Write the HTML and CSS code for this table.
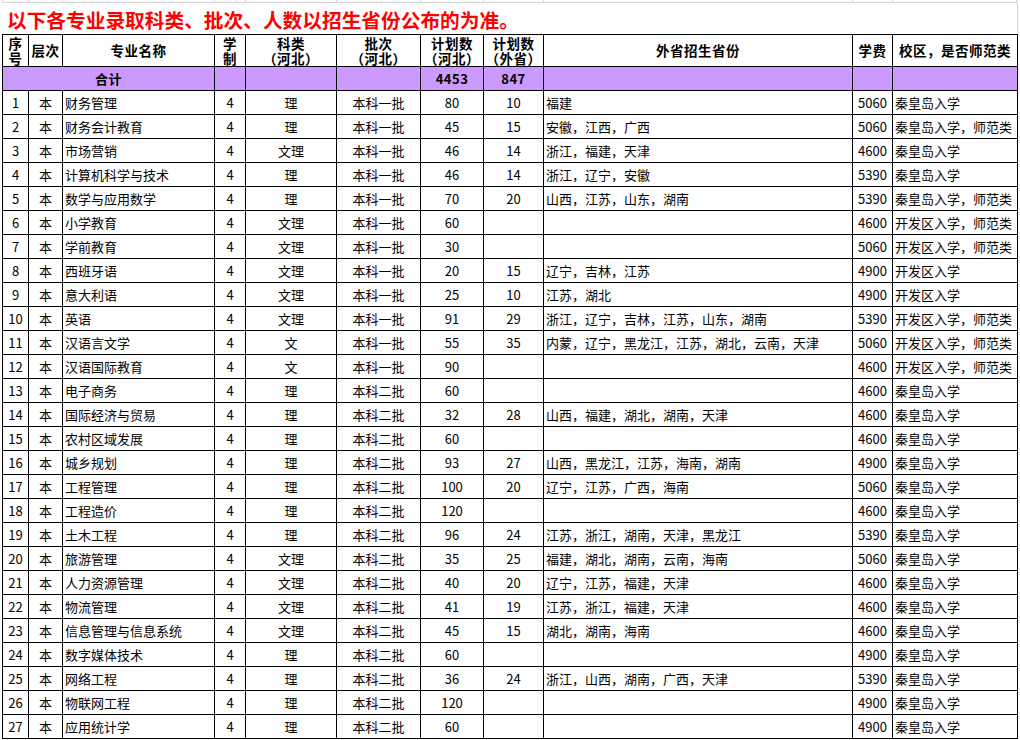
FILE: index.html
```html
<!DOCTYPE html>
<html lang="zh-CN">
<head>
<meta charset="utf-8">
<title>招生计划</title>
<link rel="stylesheet" href="styles.css">
</head>
<body>
<div class="sheet">
  <div class="gridtop">
    <span class="w1"></span><span class="w2"></span><span class="w3"></span><span class="w4"></span><span class="w5"></span><span class="w6"></span><span class="w7"></span><span class="w8"></span><span class="w9"></span><span class="w10"></span><span class="w11"></span>
  </div>
  <div class="title">以下各专业录取科类、批次、人数以招生省份公布的为准。</div>
  <table class="t">
    <colgroup>
      <col class="w1"><col class="w2"><col class="w3"><col class="w4"><col class="w5"><col class="w6"><col class="w7"><col class="w8"><col class="w9"><col class="w10"><col class="w11">
    </colgroup>
    <thead>
      <tr class="hd">
        <th><span class="ln">序</span><span class="ln">号</span></th>
        <th>层次</th>
        <th>专业名称</th>
        <th><span class="ln">学</span><span class="ln">制</span></th>
        <th><span class="ln">科类</span><span class="ln">（河北）</span></th>
        <th><span class="ln">批次</span><span class="ln">（河北）</span></th>
        <th><span class="ln">计划数</span><span class="ln">（河北）</span></th>
        <th><span class="ln">计划数</span><span class="ln">（外省）</span></th>
        <th>外省招生省份</th>
        <th>学费</th>
        <th>校区，是否师范类</th>
      </tr>
      <tr class="total">
        <td colspan="3" class="c">合计</td>
        <td></td><td></td><td></td>
        <td class="c">4453</td>
        <td class="c">847</td>
        <td></td><td></td><td></td>
      </tr>
    </thead>
    <tbody>
      <tr><td class="c">1</td><td class="c">本</td><td>财务管理</td><td class="c">4</td><td class="c">理</td><td class="c">本科一批</td><td class="c">80</td><td class="c">10</td><td>福建</td><td class="c">5060</td><td>秦皇岛入学</td></tr>
      <tr><td class="c">2</td><td class="c">本</td><td>财务会计教育</td><td class="c">4</td><td class="c">理</td><td class="c">本科一批</td><td class="c">45</td><td class="c">15</td><td>安徽，江西，广西</td><td class="c">5060</td><td>秦皇岛入学，师范类</td></tr>
      <tr><td class="c">3</td><td class="c">本</td><td>市场营销</td><td class="c">4</td><td class="c">文理</td><td class="c">本科一批</td><td class="c">46</td><td class="c">14</td><td>浙江，福建，天津</td><td class="c">4600</td><td>秦皇岛入学</td></tr>
      <tr><td class="c">4</td><td class="c">本</td><td>计算机科学与技术</td><td class="c">4</td><td class="c">理</td><td class="c">本科一批</td><td class="c">46</td><td class="c">14</td><td>浙江，辽宁，安徽</td><td class="c">5390</td><td>秦皇岛入学</td></tr>
      <tr><td class="c">5</td><td class="c">本</td><td>数学与应用数学</td><td class="c">4</td><td class="c">理</td><td class="c">本科一批</td><td class="c">70</td><td class="c">20</td><td>山西，江苏，山东，湖南</td><td class="c">5390</td><td>秦皇岛入学，师范类</td></tr>
      <tr><td class="c">6</td><td class="c">本</td><td>小学教育</td><td class="c">4</td><td class="c">文理</td><td class="c">本科一批</td><td class="c">60</td><td class="c"></td><td></td><td class="c">4600</td><td>开发区入学，师范类</td></tr>
      <tr><td class="c">7</td><td class="c">本</td><td>学前教育</td><td class="c">4</td><td class="c">文理</td><td class="c">本科一批</td><td class="c">30</td><td class="c"></td><td></td><td class="c">5060</td><td>开发区入学，师范类</td></tr>
      <tr><td class="c">8</td><td class="c">本</td><td>西班牙语</td><td class="c">4</td><td class="c">文理</td><td class="c">本科一批</td><td class="c">20</td><td class="c">15</td><td>辽宁，吉林，江苏</td><td class="c">4900</td><td>开发区入学</td></tr>
      <tr><td class="c">9</td><td class="c">本</td><td>意大利语</td><td class="c">4</td><td class="c">文理</td><td class="c">本科一批</td><td class="c">25</td><td class="c">10</td><td>江苏，湖北</td><td class="c">4900</td><td>开发区入学</td></tr>
      <tr><td class="c">10</td><td class="c">本</td><td>英语</td><td class="c">4</td><td class="c">文理</td><td class="c">本科一批</td><td class="c">91</td><td class="c">29</td><td>浙江，辽宁，吉林，江苏，山东，湖南</td><td class="c">5390</td><td>开发区入学，师范类</td></tr>
      <tr><td class="c">11</td><td class="c">本</td><td>汉语言文学</td><td class="c">4</td><td class="c">文</td><td class="c">本科一批</td><td class="c">55</td><td class="c">35</td><td>内蒙，辽宁，黑龙江，江苏，湖北，云南，天津</td><td class="c">5060</td><td>开发区入学，师范类</td></tr>
      <tr><td class="c">12</td><td class="c">本</td><td>汉语国际教育</td><td class="c">4</td><td class="c">文</td><td class="c">本科一批</td><td class="c">90</td><td class="c"></td><td></td><td class="c">4600</td><td>开发区入学，师范类</td></tr>
      <tr><td class="c">13</td><td class="c">本</td><td>电子商务</td><td class="c">4</td><td class="c">理</td><td class="c">本科二批</td><td class="c">60</td><td class="c"></td><td></td><td class="c">4600</td><td>秦皇岛入学</td></tr>
      <tr><td class="c">14</td><td class="c">本</td><td>国际经济与贸易</td><td class="c">4</td><td class="c">理</td><td class="c">本科二批</td><td class="c">32</td><td class="c">28</td><td>山西，福建，湖北，湖南，天津</td><td class="c">4600</td><td>秦皇岛入学</td></tr>
      <tr><td class="c">15</td><td class="c">本</td><td>农村区域发展</td><td class="c">4</td><td class="c">理</td><td class="c">本科二批</td><td class="c">60</td><td class="c"></td><td></td><td class="c">4600</td><td>秦皇岛入学</td></tr>
      <tr><td class="c">16</td><td class="c">本</td><td>城乡规划</td><td class="c">4</td><td class="c">理</td><td class="c">本科二批</td><td class="c">93</td><td class="c">27</td><td>山西，黑龙江，江苏，海南，湖南</td><td class="c">4900</td><td>秦皇岛入学</td></tr>
      <tr><td class="c">17</td><td class="c">本</td><td>工程管理</td><td class="c">4</td><td class="c">理</td><td class="c">本科二批</td><td class="c">100</td><td class="c">20</td><td>辽宁，江苏，广西，海南</td><td class="c">5060</td><td>秦皇岛入学</td></tr>
      <tr><td class="c">18</td><td class="c">本</td><td>工程造价</td><td class="c">4</td><td class="c">理</td><td class="c">本科二批</td><td class="c">120</td><td class="c"></td><td></td><td class="c">4600</td><td>秦皇岛入学</td></tr>
      <tr><td class="c">19</td><td class="c">本</td><td>土木工程</td><td class="c">4</td><td class="c">理</td><td class="c">本科二批</td><td class="c">96</td><td class="c">24</td><td>江苏，浙江，湖南，天津，黑龙江</td><td class="c">5390</td><td>秦皇岛入学</td></tr>
      <tr><td class="c">20</td><td class="c">本</td><td>旅游管理</td><td class="c">4</td><td class="c">文理</td><td class="c">本科二批</td><td class="c">35</td><td class="c">25</td><td>福建，湖北，湖南，云南，海南</td><td class="c">5060</td><td>秦皇岛入学</td></tr>
      <tr><td class="c">21</td><td class="c">本</td><td>人力资源管理</td><td class="c">4</td><td class="c">文理</td><td class="c">本科二批</td><td class="c">40</td><td class="c">20</td><td>辽宁，江苏，福建，天津</td><td class="c">4600</td><td>秦皇岛入学</td></tr>
      <tr><td class="c">22</td><td class="c">本</td><td>物流管理</td><td class="c">4</td><td class="c">文理</td><td class="c">本科二批</td><td class="c">41</td><td class="c">19</td><td>江苏，浙江，福建，天津</td><td class="c">4600</td><td>秦皇岛入学</td></tr>
      <tr><td class="c">23</td><td class="c">本</td><td>信息管理与信息系统</td><td class="c">4</td><td class="c">文理</td><td class="c">本科二批</td><td class="c">45</td><td class="c">15</td><td>湖北，湖南，海南</td><td class="c">4600</td><td>秦皇岛入学</td></tr>
      <tr><td class="c">24</td><td class="c">本</td><td>数字媒体技术</td><td class="c">4</td><td class="c">理</td><td class="c">本科二批</td><td class="c">60</td><td class="c"></td><td></td><td class="c">4900</td><td>秦皇岛入学</td></tr>
      <tr><td class="c">25</td><td class="c">本</td><td>网络工程</td><td class="c">4</td><td class="c">理</td><td class="c">本科二批</td><td class="c">36</td><td class="c">24</td><td>浙江，山西，湖南，广西，天津</td><td class="c">5390</td><td>秦皇岛入学</td></tr>
      <tr><td class="c">26</td><td class="c">本</td><td>物联网工程</td><td class="c">4</td><td class="c">理</td><td class="c">本科二批</td><td class="c">120</td><td class="c"></td><td></td><td class="c">4900</td><td>秦皇岛入学</td></tr>
      <tr><td class="c">27</td><td class="c">本</td><td>应用统计学</td><td class="c">4</td><td class="c">理</td><td class="c">本科二批</td><td class="c">60</td><td class="c"></td><td></td><td class="c">4900</td><td>秦皇岛入学</td></tr>
    </tbody>
  </table>
</div>
</body>
</html>
```

FILE: styles.css
```css
html, body {
  margin: 0;
  padding: 0;
  background: #fff;
  overflow: hidden;
}
body {
  font-family: "Noto Sans CJK SC", "Noto Sans", sans-serif;
  color: #000;
}
.sheet {
  padding-left: 2px;
  width: 1016px;
}
.gridtop {
  display: flex;
  height: 2px;
  border-bottom: 1px solid #d4d4d4;
}
.gridtop span {
  flex: none;
  box-sizing: border-box;
  border-left: 1px solid #d4d4d4;
}
.w1 { width: 26px; }
.w2 { width: 34px; }
.w3 { width: 152px; }
.w4 { width: 31px; }
.w5 { width: 91px; }
.w6 { width: 84px; }
.w7 { width: 63px; }
.w8 { width: 60px; }
.w9 { width: 309px; }
.w10 { width: 40px; }
.w11 { width: 125px; }
.gridtop .w11 { border-right: 1px solid #d4d4d4; }
.title {
  height: 31px;
  box-sizing: border-box;
  border-right: 1px solid #d4d4d4;
  color: #ff0000;
  font-weight: 700;
  font-size: 19.7px;
  line-height: 33px;
  padding-left: 5px;
  white-space: nowrap;
}
.t {
  border-collapse: collapse;
  table-layout: fixed;
  width: 1016px;
}
.t th, .t td {
  border: 1px solid #000;
  padding: 0 2px;
  white-space: nowrap;
  vertical-align: middle;
}
.t td {
  font-size: 13px;
  line-height: 16px;
  text-align: left;
  overflow: hidden;
}
.t td.c { text-align: center; }
.t th {
  font-size: 13.5px;
  font-weight: 700;
  line-height: 15px;
  letter-spacing: 0.5px;
  text-align: center;
  padding: 0;
}
.t th .ln {
  display: block;
  height: 15px;
}
.hd { height: 32px; }
.total { height: 24px; }
.total td {
  background: #cc99ff;
  font-weight: 700;
  font-size: 13px;
  letter-spacing: 0.5px;
}
.t tbody tr { height: 24px; }
```
